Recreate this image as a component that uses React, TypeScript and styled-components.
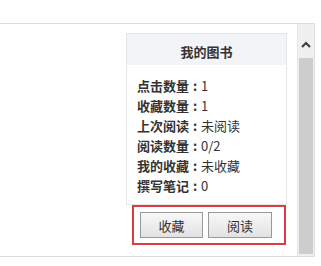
import React from "react";
import styled, { createGlobalStyle } from "styled-components";

const Global = createGlobalStyle`
  html, body { margin: 0; padding: 0; background: #ffffff; }
  body { font-family: "Noto Sans CJK SC", "Noto Sans", sans-serif; color: #333; }
`;

const Frame = styled.div`
  margin-top: 23px;
  width: 314px;
  height: 232px;
  border-top: 1px solid #dedede;
  border-right: 1px solid #dedede;
  border-bottom: 1px solid #dedede;
  display: flex;
  flex-direction: row;
`;

const Content = styled.div`
  flex: 1;
  display: flex;
  justify-content: flex-end;
  align-items: flex-start;
  padding: 9px 10px 0 0;
`;

const Side = styled.div`
  width: 161px;
  display: flex;
  flex-direction: column;
  align-items: stretch;
`;

const Panel = styled.div`
  border: 1px solid #e6e6e6;
  background: #fff;
`;

const Header = styled.div`
  height: 31px;
  box-sizing: border-box;
  padding-top: 4px;
  background: #f2f4f7;
  display: flex;
  align-items: center;
  justify-content: center;
  font-size: 13px;
  font-weight: bold;
  color: #333;
`;

const Body = styled.div`
  padding: 11px 10px 8px 10px;
  display: flex;
  flex-direction: column;
`;

const Row = styled.div`
  height: 20px;
  line-height: 20px;
  font-size: 13px;
  color: #333;
  white-space: nowrap;
  display: flex;
`;

const Label = styled.span`
  font-weight: bold;
`;

const Colon = styled.span`
  font-weight: bold;
  width: 12px;
  text-align: center;
`;

const Value = styled.span`
  font-weight: normal;
`;

const Actions = styled.div`
  margin: 0 1px 0 6px;
  border: 2px solid #dc3b3f;
  height: 36px;
  display: flex;
  align-items: center;
  gap: 5px;
  padding-left: 6px;
`;

const Button = styled.button<{ $w: number }>`
  width: ${(p) => p.$w}px;
  height: 26px;
  border: 1px solid #999;
  background: linear-gradient(#f8f8f8, #e2e2e2);
  font-family: "Noto Sans CJK SC", sans-serif;
  font-size: 13px;
  color: #333;
  padding: 0;
  display: flex;
  align-items: center;
  justify-content: center;
`;

const Scrollbar = styled.div`
  width: 16px;
  display: flex;
  flex-direction: column;
  background: #f0f0f0;
  border-left: 1px solid #e8e8e8;
`;

const Arrow = styled.div`
  height: 34px;
  box-sizing: border-box;
  padding-top: 6px;
  display: flex;
  align-items: center;
  justify-content: center;
`;

const Thumb = styled.div`
  flex: 1;
  margin: 0 1px 2px 1px;
  background: #cdcdcd;
`;

const rows: [string, string][] = [
  ["点击数量", "1"],
  ["收藏数量", "1"],
  ["上次阅读", "未阅读"],
  ["阅读数量", "0/2"],
  ["我的收藏", "未收藏"],
  ["撰写笔记", "0"],
];

export default function App() {
  return (
    <>
      <Global />
      <Frame>
        <Content>
          <Side>
            <Panel>
              <Header>我的图书</Header>
              <Body>
                {rows.map(([k, v]) => (
                  <Row key={k}>
                    <Label>{k}</Label>
                    <Colon>:</Colon>
                    <Value>{v}</Value>
                  </Row>
                ))}
              </Body>
            </Panel>
            <Actions>
              <Button $w={63}>收藏</Button>
              <Button $w={64}>阅读</Button>
            </Actions>
          </Side>
        </Content>
        <Scrollbar>
          <Arrow>
            <svg width="10" height="7" viewBox="0 0 10 7">
              <path d="M1 6 L5 2 L9 6" stroke="#404040" strokeWidth="2.2" fill="none" />
            </svg>
          </Arrow>
          <Thumb />
        </Scrollbar>
      </Frame>
    </>
  );
}
